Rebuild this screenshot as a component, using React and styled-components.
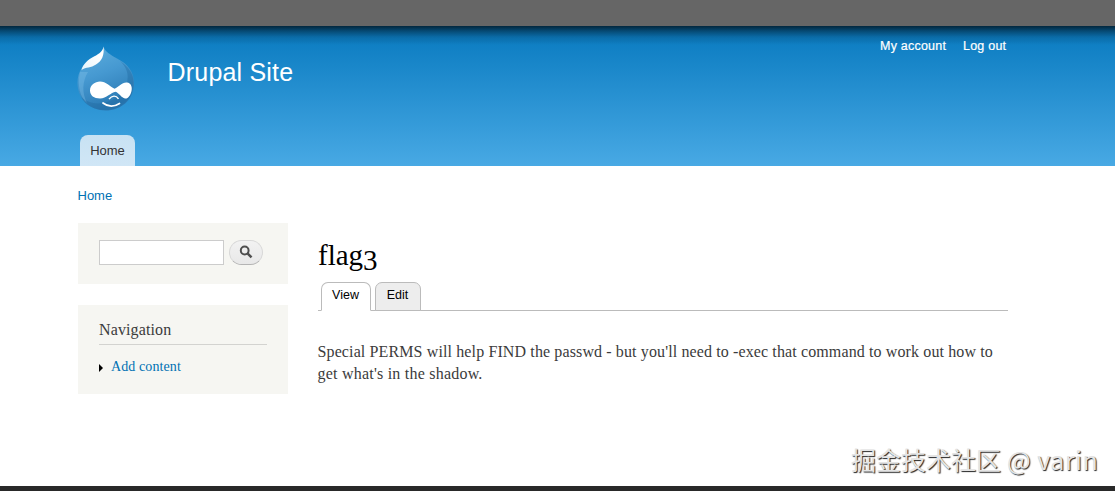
import React from "react";
import styled, { createGlobalStyle } from "styled-components";

const sans = `"Liberation Sans", Arial, sans-serif`;
const serif = `Georgia, "Liberation Serif", serif`;

const App = () => {
  return (
    <>
      <GlobalStyle />
      <S.Page>
        <S.Toolbar />
        <S.Header>
          <S.HeaderInner>
            <S.Branding>
              <DrupalLogo />
              <S.SiteName>Drupal Site</S.SiteName>
              <S.UserMenu>
                <S.UserLink $width="67px">My account</S.UserLink>
                <S.UserLink $width="44px">Log out</S.UserLink>
              </S.UserMenu>
            </S.Branding>
            <S.MainMenu>
              <S.MainTab>Home</S.MainTab>
            </S.MainMenu>
          </S.HeaderInner>
        </S.Header>

        <S.Breadcrumb>Home</S.Breadcrumb>

        <S.Columns>
          <S.Sidebar>
            <S.SearchBlock>
              <S.SearchInput type="text" aria-label="Search" />
              <S.SearchBtn aria-label="Search">
                <SearchIcon />
              </S.SearchBtn>
            </S.SearchBlock>
            <S.NavBlock>
              <S.NavTitle>Navigation</S.NavTitle>
              <S.NavItem>
                <S.Arrow />
                <a>Add content</a>
              </S.NavItem>
            </S.NavBlock>
          </S.Sidebar>

          <S.Content>
            <S.Title>
              flag<S.OldStyle>3</S.OldStyle>
            </S.Title>
            <S.Tabs>
              <S.Tab $active $width="50px">View</S.Tab>
              <S.Tab $width="46px">Edit</S.Tab>
            </S.Tabs>
            <S.Body>
              <S.Line $spacing="0.12px">
                Special PERMS will help FIND the passwd - but you'll need to -exec that command to work out how to
              </S.Line>
              <S.Line $spacing="0.22px">get what's in the shadow.</S.Line>
            </S.Body>
          </S.Content>
        </S.Columns>
        <S.BottomBar />
        <S.Watermark>
          掘金技术社区<S.Author> @ varin</S.Author>
        </S.Watermark>
      </S.Page>
    </>
  );
};

const DrupalLogo = () => (
  <S.Logo viewBox="0 0 58 66">
    <defs>
      <linearGradient id="drop" x1="0" y1="0" x2="0.35" y2="1">
        <stop offset="0" stopColor="#5fb0df" />
        <stop offset="0.5" stopColor="#4699d1" />
        <stop offset="1" stopColor="#2b7ab4" />
      </linearGradient>
      <linearGradient id="shine" x1="1" y1="0" x2="0" y2="1">
        <stop offset="0.3" stopColor="#fff" />
        <stop offset="1" stopColor="#e4f3fb" />
      </linearGradient>
    </defs>
    <path
      d="M26.500 0.500C28 6 34 9 40 12.500C51 18 57 26 57 37C57 54 44 64.500 28.500 64.500C13 64.500 0.500 53 0.500 37C0.500 25 7 17 15 12C22 8 26 5 26.500 0.500Z"
      fill="url(#drop)"
    />
    <path
      d="M43 15C52 21 56.500 28 56.500 37C56.500 54 43 64 28.500 64C17 64 8 59 4 51C14 60 29 59 40 51C51 42 56 27 43 15Z"
      fill="#20699f"
      opacity="0.4"
    />
    <path d="M3 26C0 40 3 51 10 57C5 47 5 36 11 26Z" fill="#8fcbed" opacity="0.3" />
    <path
      d="M26.500 0.500C27.500 9 25 15 19 18.500C14 22 9 21 4.500 24C6 18 11 13.500 17 10.500C23 7.500 26 5 26.500 0.500Z"
      fill="url(#shine)"
    />
    <path
      d="M13 44.500C13 39 18 35.500 23 35.500C29 35.500 33 40.500 37.500 42.800C42 41 45 36 50 36.500C54 37 55.500 41 54.500 45C53.500 49.500 51 53 48 52.500C44.500 52 42 47 38.500 45.800C34 46.500 29.500 52.500 23 52.500C17 52.500 13 49.500 13 44.500Z"
      fill="#fff"
    />
    <path d="M32 53.200C35 49.200 39 49.200 41.500 52.800" fill="none" stroke="#fff" strokeWidth="1.400" />
    <path d="M26 57C31 61 37 61 42.500 57.500" fill="none" stroke="#fff" strokeWidth="1.700" strokeLinecap="round" />
  </S.Logo>
);

const SearchIcon = () => (
  <svg width="14" height="14" viewBox="0 0 14 14" fill="none" stroke="#4f4f4f">
    <circle cx="5.700" cy="5.500" r="3.900" strokeWidth="2" />
    <path d="M8.500 8.300L12.500 12.300" strokeWidth="2.400" />
  </svg>
);

export default App;

const GlobalStyle = createGlobalStyle`
  * {
    box-sizing: border-box;
  }

  body {
    margin: 0;
    background: #fff;
    overflow: hidden;
  }
`;

const S = {
  Page: styled.div`
    width: 1115px;
    height: 491px;
    display: flex;
    flex-direction: column;
    font-family: ${sans};
    color: #3b3b3b;
  `,
  Toolbar: styled.div`
    height: 26px;
    flex: none;
    background: #666;
  `,
  Header: styled.header`
    height: 140px;
    flex: none;
    background:
      linear-gradient(rgba(0, 0, 0, 0.68) 0, rgba(0, 0, 0, 0.4) 5px, rgba(0, 0, 0, 0.14) 11px, transparent 19px),
      linear-gradient(#0779bf, #48a9e4);
  `,
  HeaderInner: styled.div`
    width: 930px;
    height: 100%;
    margin-left: 77px;
    display: flex;
    flex-direction: column;
    justify-content: space-between;
  `,
  Branding: styled.div`
    display: flex;
    align-items: flex-start;
    padding-top: 20px;
  `,
  Logo: styled.svg`
    width: 58px;
    height: 66px;
    flex: none;
  `,
  SiteName: styled.h1`
    margin: 11px 0 0 32.5px;
    font-size: 25px;
    font-weight: 400;
    line-height: 30px;
    letter-spacing: 0.2px;
    color: #fff;
  `,
  UserMenu: styled.nav`
    margin: -8px 0 0 auto;
    display: flex;
    gap: 16px;
  `,
  UserLink: styled.a`
    width: ${(props) => props.$width};
    font-size: 12.5px;
    line-height: 16px;
    letter-spacing: 0.22px;
    white-space: nowrap;
    color: #fff;
    -webkit-text-stroke: 0.2px #fff;
  `,
  MainMenu: styled.nav`
    padding-left: 3px;
    display: flex;
  `,
  MainTab: styled.a`
    width: 55px;
    height: 31px;
    border-radius: 8px 8px 0 0;
    background: linear-gradient(#c8e2f3, #d0e6f6);
    font-size: 13px;
    line-height: 31px;
    text-align: center;
    color: #333;
  `,
  Breadcrumb: styled.div`
    height: 57px;
    flex: none;
    padding: 21px 0 0 77.5px;
    font-size: 13px;
    line-height: 17px;
    color: #0071b3;
  `,
  Columns: styled.div`
    flex: 1;
    display: flex;
    align-items: flex-start;
    gap: 30px;
    padding-left: 78px;
  `,
  Sidebar: styled.aside`
    width: 210px;
    display: flex;
    flex-direction: column;
    gap: 21px;
    font-family: ${serif};
  `,
  SearchBlock: styled.div`
    height: 61px;
    padding: 17px 0 0 21px;
    display: flex;
    align-items: flex-start;
    gap: 5px;
    background: #f6f6f2;
  `,
  SearchInput: styled.input`
    width: 125px;
    height: 25px;
    padding: 2px;
    border: 1px solid #ccc;
    background: #fff;
  `,
  SearchBtn: styled.button`
    width: 34px;
    height: 25px;
    padding: 0 0 1px;
    display: flex;
    align-items: center;
    justify-content: center;
    border: 1px solid #d8d8d8;
    border-bottom-color: #b4b4b4;
    border-radius: 13px;
    background: linear-gradient(#f2f2f2, #e8e8e8);
  `,
  NavBlock: styled.div`
    height: 89px;
    padding: 15px 21px 0;
    background: #f6f6f2;
  `,
  NavTitle: styled.h2`
    height: 25px;
    margin: 0;
    border-bottom: 1px solid #d3d3d0;
    font-size: 16px;
    font-weight: 400;
    line-height: 20px;
    letter-spacing: 0.12px;
  `,
  NavItem: styled.div`
    margin-top: 13px;
    display: flex;
    align-items: center;
    gap: 8px;
    font-size: 14px;
    line-height: 18px;
    letter-spacing: 0.1px;
    color: #0071b3;
  `,
  Arrow: styled.span`
    margin-top: 1px;
    border-style: solid;
    border-width: 4px 0 4px 4px;
    border-color: transparent transparent transparent #000;
  `,
  Content: styled.main`
    width: 690px;
    padding-top: 14px;
    font-family: ${serif};
  `,
  Title: styled.h1`
    height: 45px;
    margin: 0;
    font-size: 29px;
    font-weight: 400;
    line-height: 36px;
    color: #000;
  `,
  // old-style numeral, hangs below the baseline
  OldStyle: styled.span`
    display: inline-block;
    transform: translateY(5px);
  `,
  Tabs: styled.div`
    height: 29px;
    padding-left: 2.500px;
    display: flex;
    gap: 4px;
    border-bottom: 1px solid #bbb;
    font-family: ${sans};
  `,
  Tab: styled.a`
    width: ${(props) => props.$width};
    height: 29px;
    border: 1px solid #bbb;
    border-bottom-color: ${(props) => (props.$active ? "#fff" : "#bbb")};
    border-radius: 7px 7px 0 0;
    background: ${(props) => (props.$active ? "#fff" : "#ededed")};
    font-size: 12.5px;
    line-height: 24px;
    text-align: center;
    color: #000;
  `,
  Body: styled.div`
    margin-top: 30px;
    margin-left: -0.5px;
  `,
  Line: styled.p`
    margin: 0;
    font-size: 16px;
    line-height: 22px;
    letter-spacing: ${(props) => props.$spacing};
    white-space: nowrap;
  `,
  BottomBar: styled.div`
    height: 5px;
    flex: none;
    background: #292929;
  `,
  Watermark: styled.div`
    position: absolute;
    left: 851px;
    top: 441px;
    font-family: "Noto Sans CJK SC", sans-serif;
    font-size: 25px;
    line-height: 36px;
    white-space: pre;
    color: #e4e4e4;
    text-shadow: 1px 1px 1px #222;
  `,
  Author: styled.span`
    letter-spacing: 0.5px;
  `,
};
